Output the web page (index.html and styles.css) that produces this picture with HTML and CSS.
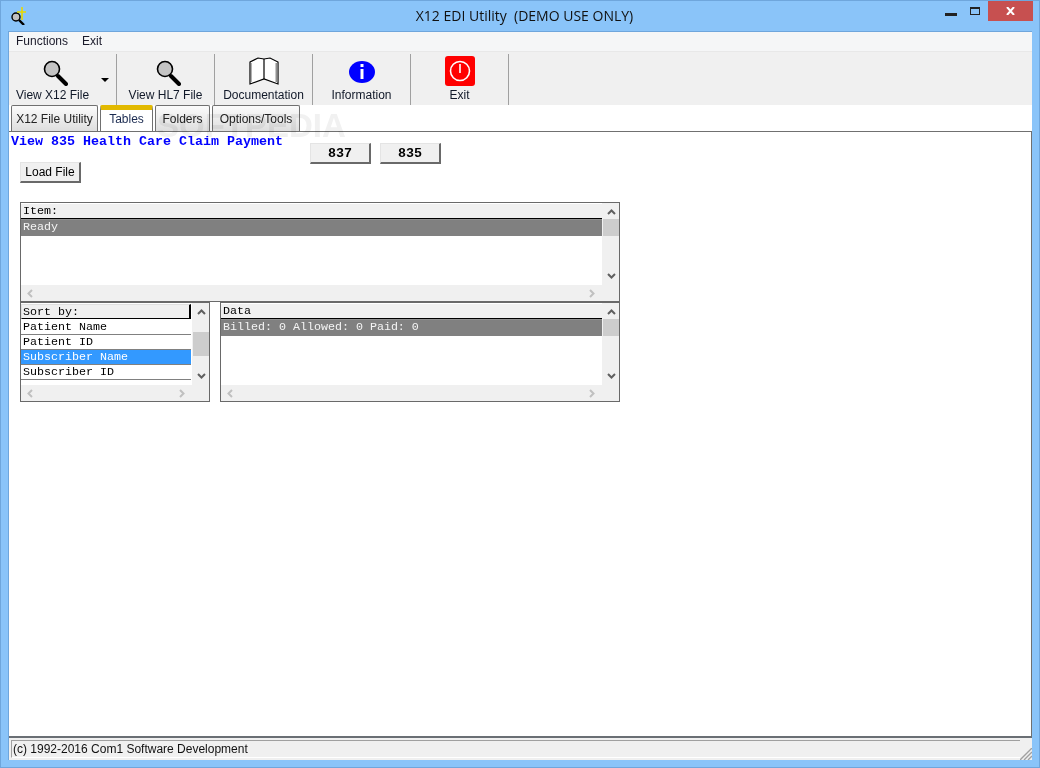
FILE: index.html
```html
<!DOCTYPE html>
<html lang="en">
<head>
    <meta charset="UTF-8">
    <title>X12 EDI Utility (DEMO USE ONLY)</title>
    <link rel="stylesheet" href="styles.css">
</head>
<body>
<div class="window">
    <div class="titlebar">
        <svg class="app-icon" width="18" height="18" viewBox="0 0 18 18">
            <circle cx="6" cy="10" r="4" fill="#c0c0c0" stroke="#000" stroke-width="1.4"/>
            <path d="M9 13l5 5" stroke="#000" stroke-width="2.4"/>
            <path d="M12 0v13M7 5h9" stroke="#e8d800" stroke-width="1.6"/>
        </svg>
        <div class="title">X12 EDI Utility&nbsp; (DEMO USE ONLY)</div>
        <div class="caption-btns">
            <div class="cap-min"></div>
            <div class="cap-max"></div>
            <div class="cap-close">
                <svg width="9" height="8" viewBox="0 0 9 8"><path d="M1 0l7 8M8 0l-7 8" stroke="#fff" stroke-width="2"/></svg>
            </div>
        </div>
    </div>

    <div class="client">
        <div class="menubar">
            <span>Functions</span>
            <span>Exit</span>
        </div>

        <div class="toolbar">
            <div class="tool tool-first">
                <div class="tool-icon">
                    <svg width="30" height="30" viewBox="0 0 30 30">
                        <path d="M20 20l8 8" stroke="#000" stroke-width="4" stroke-linecap="round"/>
                        <circle cx="14" cy="13" r="7.5" fill="#c4c4c4" stroke="#000" stroke-width="1.6"/>
                    </svg>
                </div>
                <div class="tool-label">View X12 File</div>
                <div class="drop-arrow"></div>
            </div>
            <div class="tool">
                <div class="tool-icon">
                    <svg width="30" height="30" viewBox="0 0 30 30">
                        <path d="M20 20l8 8" stroke="#000" stroke-width="4" stroke-linecap="round"/>
                        <circle cx="14" cy="13" r="7.5" fill="#c4c4c4" stroke="#000" stroke-width="1.6"/>
                    </svg>
                </div>
                <div class="tool-label">View HL7 File</div>
            </div>
            <div class="tool">
                <div class="tool-icon">
                    <svg width="30" height="30" viewBox="0 0 30 30">
                        <path d="M1 6l8-4 6 1 6-1 8 4v22l-14-5-14 5z" fill="#fff" stroke="#000" stroke-width="1.2"/>
                        <path d="M15 3v20" stroke="#000" stroke-width="1.2"/>
                        <path d="M27.5 7v19" stroke="#909090" stroke-width="2"/>
                        <path d="M2.5 7v19" stroke="#b0b0b0" stroke-width="1"/>
                    </svg>
                </div>
                <div class="tool-label">Documentation</div>
            </div>
            <div class="tool">
                <div class="tool-icon">
                    <svg width="30" height="30" viewBox="0 0 30 30">
                        <ellipse cx="15" cy="16" rx="13" ry="11" fill="#0000ff"/>
                        <rect x="13.5" y="8" width="3" height="3" fill="#fff"/>
                        <rect x="13.5" y="13" width="3" height="10" fill="#fff"/>
                    </svg>
                </div>
                <div class="tool-label">Information</div>
            </div>
            <div class="tool">
                <div class="tool-icon">
                    <svg width="30" height="30" viewBox="0 0 30 30">
                        <rect width="30" height="30" rx="3" fill="#ff0000"/>
                        <circle cx="15" cy="15" r="9.5" fill="none" stroke="#fff" stroke-width="1.6"/>
                        <path d="M15 8v9" stroke="#fff" stroke-width="1.6"/>
                    </svg>
                </div>
                <div class="tool-label">Exit</div>
            </div>
        </div>

        <div class="tabstrip">
            <div class="tab tab-a">X12 File Utility</div>
            <div class="tab tab-b active">Tables</div>
            <div class="tab tab-c">Folders</div>
            <div class="tab tab-d">Options/Tools</div>
            <div class="watermark">SOFTPEDIA</div>
        </div>

        <div class="panel">
            <div class="top-row">
                <div class="top-left">
                    <div class="heading">View 835 Health Care Claim Payment</div>
                    <button class="btn btn-load">Load File</button>
                </div>
                <button class="btn btn-mono">837</button>
                <button class="btn btn-mono">835</button>
            </div>

            <div class="lists">
                <div class="lv lv-item">
                    <div class="lv-body">
                        <div class="lv-head">Item:</div>
                        <div class="lv-row sel-gray">Ready</div>
                    </div>
                    <div class="vscroll">
                        <svg class="chev" width="9" height="6" viewBox="0 0 9 6"><path d="M1 5l3.5-3.5L8 5" fill="none" stroke="#606060" stroke-width="2"/></svg>
                        <div class="thumb thumb-item"></div>
                        <svg class="chev chev-end" width="9" height="6" viewBox="0 0 9 6"><path d="M1 1l3.5 3.5L8 1" fill="none" stroke="#606060" stroke-width="2"/></svg>
                    </div>
                    <div class="hscroll">
                        <svg width="6" height="9" viewBox="0 0 6 9"><path d="M5 1L1.5 4.5 5 8" fill="none" stroke="#c0c0c0" stroke-width="2"/></svg>
                        <svg width="6" height="9" viewBox="0 0 6 9"><path d="M1 1l3.5 3.5L1 8" fill="none" stroke="#c0c0c0" stroke-width="2"/></svg>
                    </div>
                    <div class="corner"></div>
                </div>

                <div class="lists-bottom">
                    <div class="lv lv-sort">
                        <div class="lv-body">
                            <div class="lv-head lv-head-raised">Sort by:</div>
                            <div class="lv-row lined">Patient Name</div>
                            <div class="lv-row lined">Patient ID</div>
                            <div class="lv-row lined sel-blue">Subscriber Name</div>
                            <div class="lv-row lined">Subscriber ID</div>
                        </div>
                        <div class="vscroll">
                            <svg class="chev" width="9" height="6" viewBox="0 0 9 6"><path d="M1 5l3.5-3.5L8 5" fill="none" stroke="#606060" stroke-width="2"/></svg>
                            <div class="thumb thumb-sort"></div>
                            <svg class="chev chev-end" width="9" height="6" viewBox="0 0 9 6"><path d="M1 1l3.5 3.5L8 1" fill="none" stroke="#606060" stroke-width="2"/></svg>
                        </div>
                        <div class="hscroll">
                            <svg width="6" height="9" viewBox="0 0 6 9"><path d="M5 1L1.5 4.5 5 8" fill="none" stroke="#c0c0c0" stroke-width="2"/></svg>
                            <svg width="6" height="9" viewBox="0 0 6 9"><path d="M1 1l3.5 3.5L1 8" fill="none" stroke="#c0c0c0" stroke-width="2"/></svg>
                        </div>
                        <div class="corner"></div>
                    </div>

                    <div class="lv lv-data">
                        <div class="lv-body">
                            <div class="lv-head">Data</div>
                            <div class="lv-row sel-gray">Billed: 0 Allowed: 0 Paid: 0</div>
                        </div>
                        <div class="vscroll">
                            <svg class="chev" width="9" height="6" viewBox="0 0 9 6"><path d="M1 5l3.5-3.5L8 5" fill="none" stroke="#606060" stroke-width="2"/></svg>
                            <div class="thumb thumb-item"></div>
                            <svg class="chev chev-end" width="9" height="6" viewBox="0 0 9 6"><path d="M1 1l3.5 3.5L8 1" fill="none" stroke="#606060" stroke-width="2"/></svg>
                        </div>
                        <div class="hscroll">
                            <svg width="6" height="9" viewBox="0 0 6 9"><path d="M5 1L1.5 4.5 5 8" fill="none" stroke="#c0c0c0" stroke-width="2"/></svg>
                            <svg width="6" height="9" viewBox="0 0 6 9"><path d="M1 1l3.5 3.5L1 8" fill="none" stroke="#c0c0c0" stroke-width="2"/></svg>
                        </div>
                        <div class="corner"></div>
                    </div>
                </div>
            </div>
        </div>

        <div class="statusbar">
            <div class="status-text">(c) 1992-2016 Com1 Software Development</div>
            <svg class="grip" width="12" height="12" viewBox="0 0 12 12"><path d="M0 12L12 0M4 12l8-8M8 12l4-4" stroke="#a0a0a0" stroke-width="1.4"/></svg>
        </div>
    </div>
</div>
</body>
</html>
```

FILE: styles.css
```css
* {
    box-sizing: border-box;
}
html, body {
    margin: 0;
    padding: 0;
    overflow: hidden;
}
body {
    width: 1040px;
    height: 768px;
    font-family: "Liberation Sans", Arial, sans-serif;
    font-size: 12px;
    color: #000;
}
.window {
    width: 1040px;
    height: 768px;
    background: #8ac4f9;
    border: 1px solid #6fa6dc;
    padding: 0 7px 7px;
    display: flex;
    flex-direction: column;
}

/* title bar */
.titlebar {
    height: 30px;
    margin: 0 -7px;
    padding-left: 9px;
    display: grid;
    grid-template-columns: 1fr auto 1fr;
    align-items: start;
}
.app-icon {
    margin-top: 6px;
}
.title {
    font-family: "Open Sans", sans-serif;
    font-size: 14px;
    line-height: 30px;
    color: #111;
}
.caption-btns {
    display: flex;
    justify-content: flex-end;
    padding-right: 6px;
}
.cap-min {
    width: 12px;
    height: 3px;
    margin: 12px 13px 0 0;
    background: #222;
}
.cap-max {
    width: 10px;
    height: 8px;
    margin: 6px 8px 0 0;
    border: 1px solid #222;
    border-top-width: 2px;
}
.cap-close {
    width: 45px;
    height: 20px;
    background: #c75050;
    display: flex;
    align-items: center;
    justify-content: center;
}

.client {
    flex: 1;
    display: flex;
    flex-direction: column;
    border-left: 1px solid #6fa6dc;
    border-top: 1px solid #6fa6dc;
    min-height: 0;
}

.menubar {
    height: 19px;
    background: #f5f6f7;
    display: flex;
    gap: 14px;
    padding: 0 0 0 7px;
    line-height: 19px;
    color: #1a1a2a;
}

/* toolbar */
.toolbar {
    height: 54px;
    background: #f0f0f0;
    border-top: 1px solid #e8e8e8;
    display: flex;
    padding-top: 2px;
}
.tool {
    width: 98px;
    height: 51px;
    border-right: 1px solid #a0a0a0;
    display: flex;
    flex-direction: column;
    align-items: center;
}
.tool-first {
    width: 108px;
    padding-right: 20px;
    position: relative;
}
.tool-icon {
    height: 33px;
    display: flex;
    align-items: center;
    justify-content: center;
}
.tool-label {
    line-height: 16px;
    white-space: nowrap;
    color: #101828;
}
.drop-arrow {
    position: absolute;
    top: 24px;
    right: 7px;
    width: 0;
    height: 0;
    border-left: 4px solid transparent;
    border-right: 4px solid transparent;
    border-top: 4px solid #000;
}

/* tabs */
.tabstrip {
    height: 26px;
    background: #fff;
    display: flex;
    padding-left: 2px;
    position: relative;
}
.tab {
    height: 26px;
    border: 1px solid #707070;
    border-bottom: none;
    border-radius: 2px 2px 0 0;
    background: linear-gradient(#fbfbfb, #dedede);
    text-align: center;
    line-height: 26px;
    margin-right: 2px;
    color: #222;
    position: relative;
    z-index: 1;
}
.tab-a { width: 87px; }
.tab-b { width: 53px; }
.tab-c { width: 55px; }
.tab-d { width: 88px; }
.tab.active {
    background: #fff;
    border-top: 5px solid #e2b900;
    line-height: 18px;
    color: #1a2a50;
}
.watermark {
    position: absolute;
    left: 148px;
    top: 2px;
    font-size: 33px;
    font-weight: bold;
    letter-spacing: 0;
    color: #f1f1f1;
    z-index: 2;
    mix-blend-mode: multiply;
    white-space: nowrap;
}

/* main panel */
.panel {
    flex: 1;
    background: #fff;
    border-top: 1px solid #707070;
    border-right: 1px solid #707070;
    padding: 3px 0 0 2px;
    min-height: 0;
}
.top-row {
    display: flex;
    align-items: flex-start;
}
.top-left {
    width: 299px;
}
.heading {
    font-family: "Liberation Mono", "Courier New", monospace;
    font-size: 13.33px;
    font-weight: bold;
    line-height: 14px;
    color: #0000ff;
    white-space: nowrap;
}
.btn {
    display: block;
    background: #f0f0f0;
    border: 1px solid #e4e4e4;
    border-right: 2px solid #696969;
    border-bottom: 2px solid #696969;
    padding: 0;
    color: #000;
}
.btn-load {
    width: 61px;
    height: 21px;
    margin: 13px 0 0 9px;
    font-family: "Liberation Sans", Arial, sans-serif;
    font-size: 12px;
}
.btn-mono {
    width: 61px;
    height: 21px;
    margin: 8px 9px 0 0;
    font-family: "Liberation Mono", "Courier New", monospace;
    font-size: 13.33px;
    font-weight: bold;
}

/* list views */
.lists {
    width: 600px;
    margin: 19px 0 0 9px;
}
.lists-bottom {
    display: flex;
    justify-content: space-between;
}
.lv {
    height: 100px;
    border: 1px solid #696969;
    display: grid;
    grid-template-columns: 1fr 16px;
    grid-template-rows: 1fr 16px;
    font-family: "Liberation Mono", "Courier New", monospace;
    font-size: 11.67px;
    background: #f0f0f0;
}
.lv-item { width: 600px; }
.lv-sort { width: 190px; }
.lv-data { width: 400px; }
.lv-body {
    background: #fff;
    overflow: hidden;
    margin-right: 1px;
    white-space: nowrap;
}
.lv-head {
    height: 15px;
    line-height: 15px;
    margin-top: 1px;
    padding-left: 2px;
    background: #f0f0f0;
    border-bottom: 1px solid #000;
    box-shadow: 0 1px 0 #909090;
}
.lv-head-raised {
    border-right: 2px solid #000;
    border-top: 1px solid #e0e0e0;
    border-left: 1px solid #e0e0e0;
    box-shadow: none;
    padding-left: 1px;
    margin-right: 1px;
}
.lv-row {
    height: 15px;
    line-height: 15px;
    padding-left: 2px;
}
.lined {
    border-bottom: 1px solid #808080;
    margin-right: 1px;
}
.lv-head + .lv-row {
    margin-top: 1px;
}
.sel-gray {
    background: #808080;
    color: #f4f4f4;
    height: 16px;
}
.sel-blue {
    background: #3399ff;
    color: #fff;
}
.vscroll {
    display: flex;
    flex-direction: column;
    align-items: center;
    padding-top: 6px;
    background: #f0f0f0;
}
.chev {
    flex-shrink: 0;
}
.chev-end {
    margin-top: auto;
    margin-bottom: 6px;
}
.thumb {
    width: 16px;
    background: #cdcdcd;
    flex-shrink: 0;
    margin-top: 4px;
}
.thumb-item { height: 17px; }
.thumb-sort { height: 24px; margin-top: 17px; }
.hscroll {
    display: flex;
    justify-content: space-between;
    align-items: center;
    padding: 0 8px 0 6px;
    background: #f0f0f0;
}
.corner {
    background: #f0f0f0;
}

/* status bar */
.statusbar {
    height: 24px;
    background: #f0f0f0;
    border-top: 2px solid #6a6f74;
    padding: 2px 0 0 2px;
    display: flex;
    align-items: flex-start;
    position: relative;
}
.status-text {
    width: 1009px;
    height: 18px;
    border-top: 1px solid #a0a0a0;
    border-left: 1px solid #a0a0a0;
    border-bottom: 1px solid #fff;
    line-height: 17px;
    padding-left: 1px;
    white-space: nowrap;
    color: #111;
}
.grip {
    position: absolute;
    right: 0;
    bottom: 0;
}
```
